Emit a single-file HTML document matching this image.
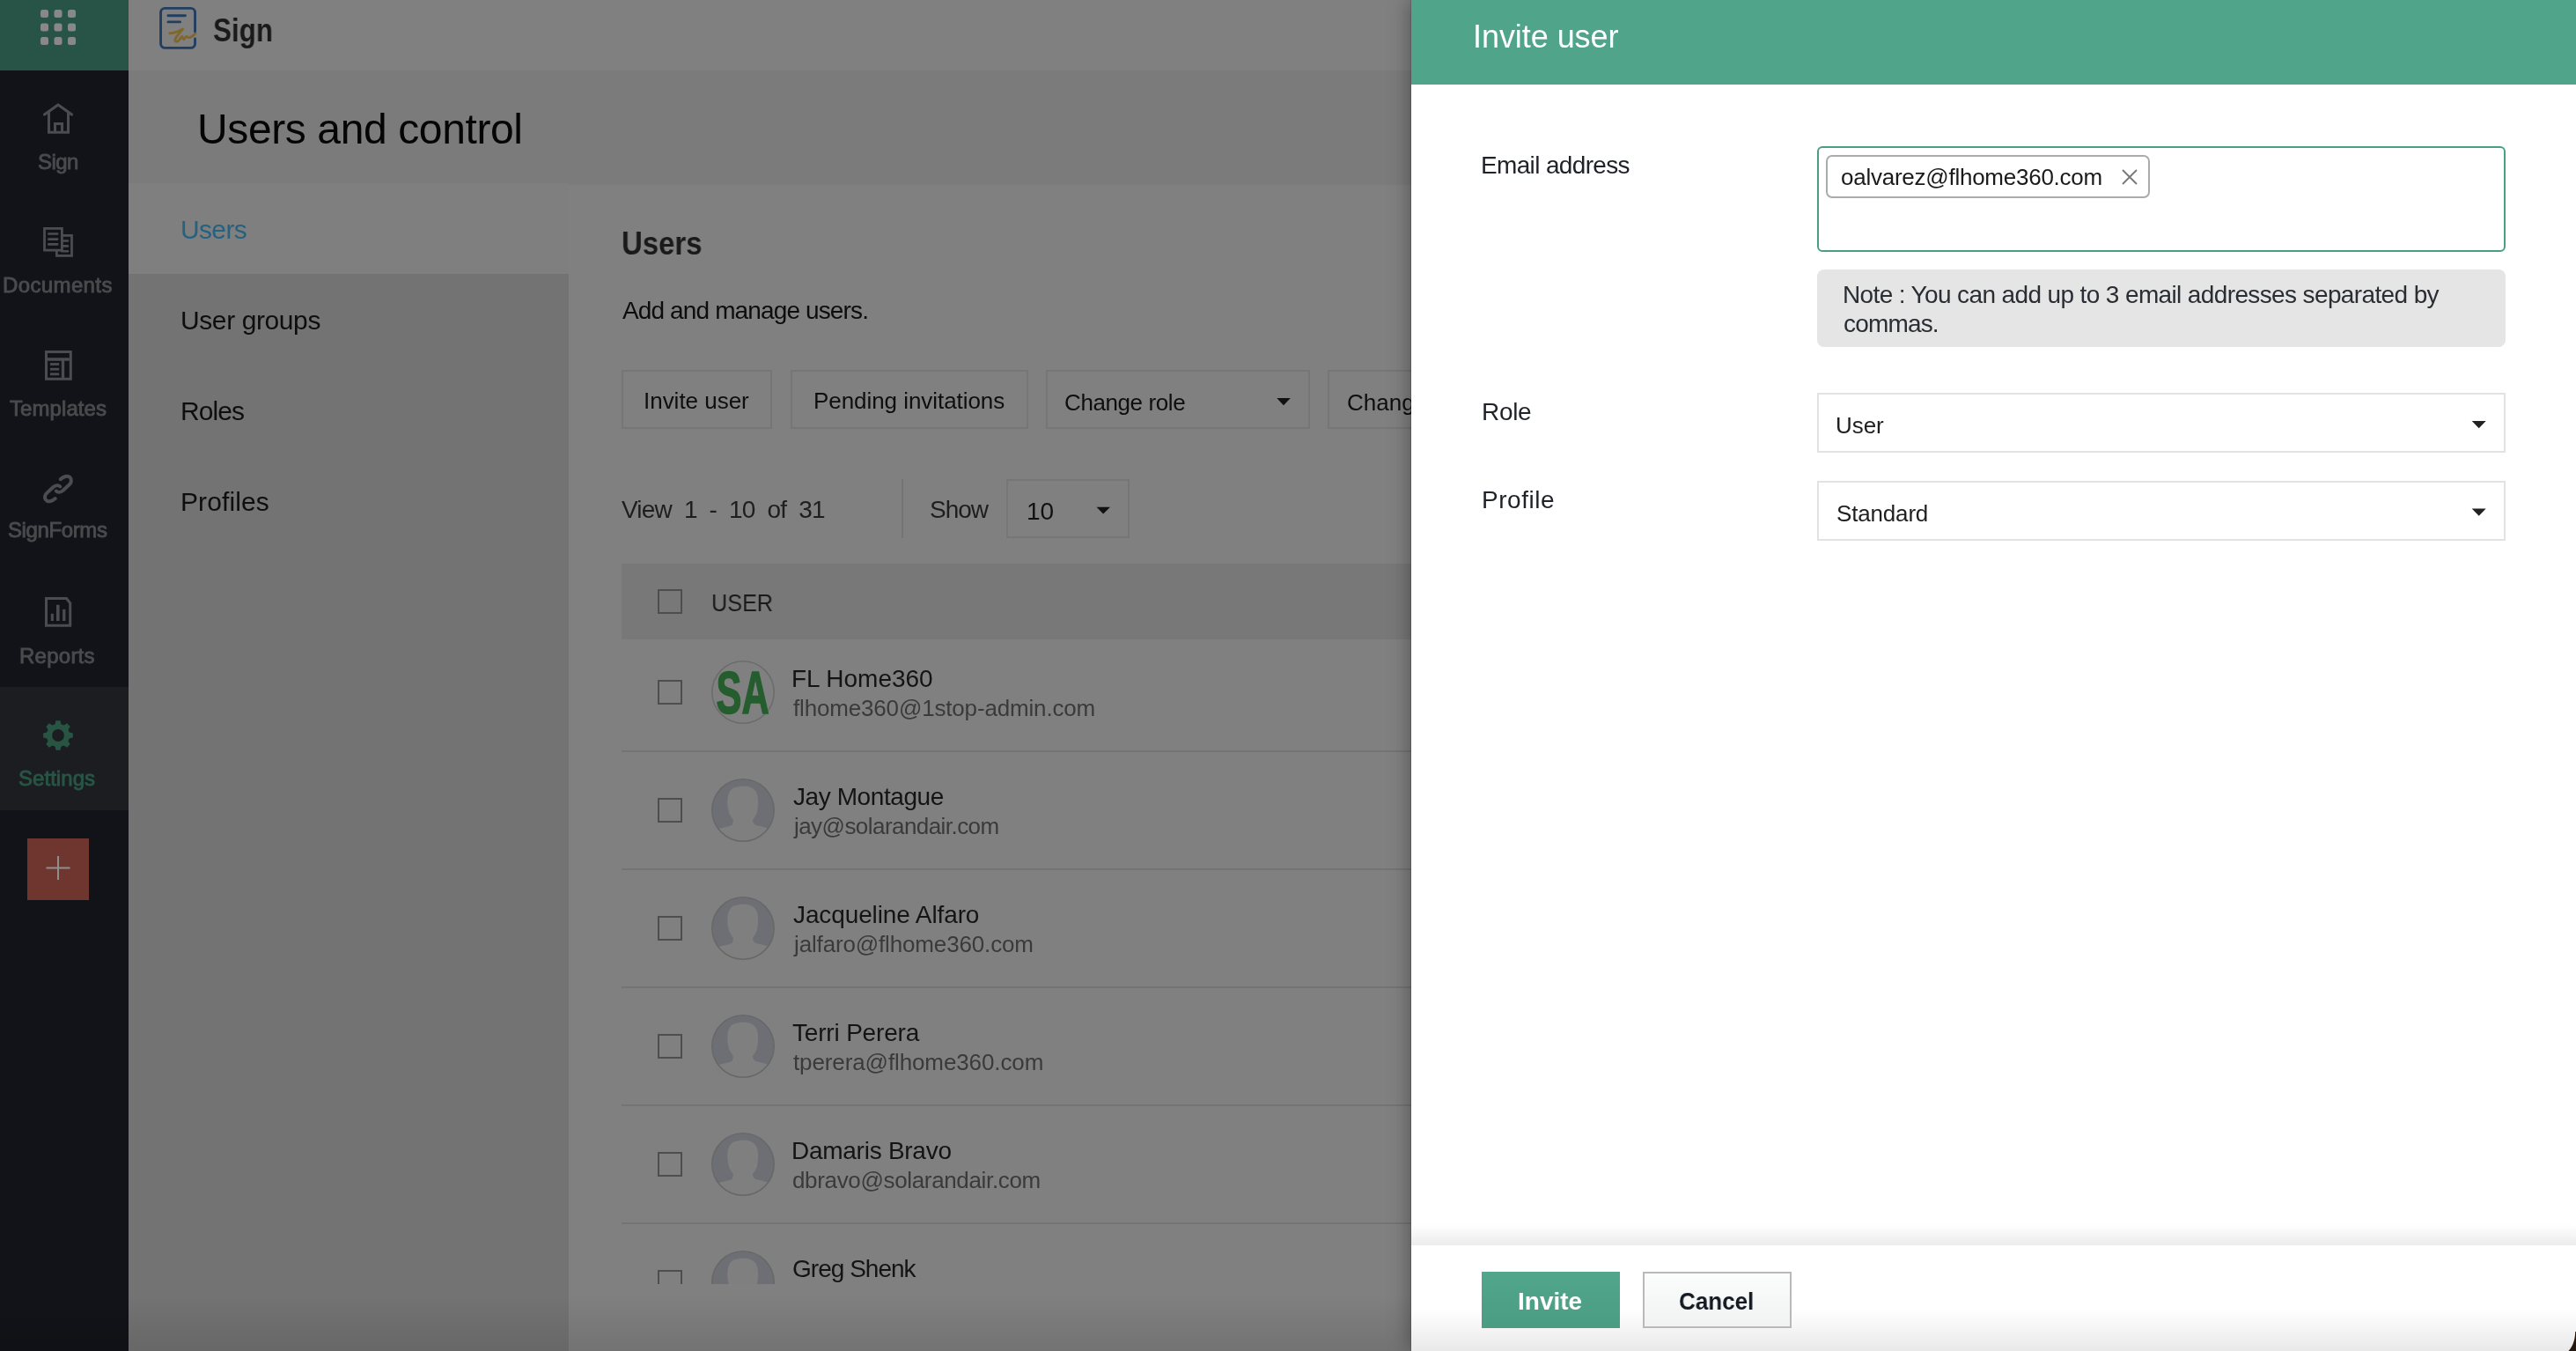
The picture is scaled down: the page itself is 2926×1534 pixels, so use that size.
<!DOCTYPE html>
<html><head><meta charset="utf-8"><title>Invite user</title>
<style>
html,body{margin:0;padding:0;width:2926px;height:1534px;overflow:hidden;background:#808080;}
body{position:relative;font-family:"Liberation Sans",sans-serif;-webkit-font-smoothing:antialiased;}
.b{position:absolute;}
.t{position:absolute;white-space:pre;will-change:transform;}
svg.b{overflow:visible;}
</style></head><body>
<div class="b" style="left:0px;top:0px;width:2926px;height:1534px;background:#808080;"></div>
<div class="b" style="left:146px;top:0px;width:1457px;height:80px;background:#808080;"></div>
<div class="b" style="left:146px;top:80px;width:1457px;height:130px;background:#7b7b7b;"></div>
<div class="b" style="left:146px;top:208px;width:500px;height:103px;background:#7f7f7f;"></div>
<div class="b" style="left:146px;top:311px;width:500px;height:1223px;background:#737373;"></div>
<div class="b" style="left:646px;top:210px;width:957px;height:1324px;background:#808080;"></div>
<div class="b" style="left:0px;top:0px;width:146px;height:1534px;background:#111318;"></div>
<div class="b" style="left:0px;top:0px;width:146px;height:80px;background:#275446;"></div>
<div class="b" style="left:0px;top:780px;width:146px;height:140px;background:#1b1d21;"></div>
<div class="b" style="left:31px;top:952px;width:70px;height:70px;background:#6f362f;"></div>
<svg class="b" style="left:0;top:0" width="146" height="1100"><rect x="46" y="11" width="9" height="9" rx="2.5" fill="#888"/><rect x="46" y="26.5" width="9" height="9" rx="2.5" fill="#888"/><rect x="46" y="42" width="9" height="9" rx="2.5" fill="#888"/><rect x="61.5" y="11" width="9" height="9" rx="2.5" fill="#888"/><rect x="61.5" y="26.5" width="9" height="9" rx="2.5" fill="#888"/><rect x="61.5" y="42" width="9" height="9" rx="2.5" fill="#888"/><rect x="77" y="11" width="9" height="9" rx="2.5" fill="#888"/><rect x="77" y="26.5" width="9" height="9" rx="2.5" fill="#888"/><rect x="77" y="42" width="9" height="9" rx="2.5" fill="#888"/><path d="M50.5 130 L66 119 L81.5 130" fill="none" stroke="#4b4c4f" stroke-width="3.2" stroke-linecap="round" stroke-linejoin="round"/><path d="M55.5 127 V150.3 H77.5 V127" fill="none" stroke="#4b4c4f" stroke-width="3"/><path d="M62.5 150 V140.5 H70.5 V150" fill="none" stroke="#4b4c4f" stroke-width="3"/><rect x="64.4" y="267.4" width="17.1" height="23" fill="none" stroke="#4b4c4f" stroke-width="2.8"/><path d="M70 273.5 H77" stroke="#4b4c4f" stroke-width="2.6" stroke-linecap="round"/><path d="M70 279.4 H77" stroke="#4b4c4f" stroke-width="2.6" stroke-linecap="round"/><path d="M70 285.2 H77" stroke="#4b4c4f" stroke-width="2.6" stroke-linecap="round"/><rect x="50.5" y="259.4" width="19.9" height="24.7" fill="#111318" stroke="#4b4c4f" stroke-width="2.8"/><path d="M55.3 265.5 H65.2" stroke="#4b4c4f" stroke-width="2.6" stroke-linecap="round"/><path d="M55.3 271.6 H65.2" stroke="#4b4c4f" stroke-width="2.6" stroke-linecap="round"/><path d="M55.3 277.4 H65.2" stroke="#4b4c4f" stroke-width="2.6" stroke-linecap="round"/><rect x="52.5" y="399.5" width="27.8" height="30.8" fill="none" stroke="#4b4c4f" stroke-width="3"/><path d="M55 408 H77.5" stroke="#4b4c4f" stroke-width="3.6" stroke-linecap="round"/><path d="M71.5 408 V429" stroke="#4b4c4f" stroke-width="3.3"/><path d="M57 413.5 H67.2" stroke="#4b4c4f" stroke-width="2.8"/><path d="M57 419.2 H67.2" stroke="#4b4c4f" stroke-width="2.8"/><path d="M57 424.8 H67.2" stroke="#4b4c4f" stroke-width="2.8"/><g fill="none" stroke="#4b4c4f" stroke-width="4" stroke-linecap="round" stroke-linejoin="round"><path d="M62.8 566.1 C59 569.5 54 570.5 52 567.5 C50 565 51 561.5 53.5 559.5 L60.5 553 C63 551 66.5 550.5 68.3 552.5"/><path d="M68.7 544.2 C72 541 77 539.5 79.5 542 C82 544.5 81 548.5 78.5 550.5 L71.5 557 C69 559 65.5 559.5 63.8 557.5"/></g><path d="M52.5 679.5 H75.5 L79.7 684.7 V710.3 H52.5 Z" fill="none" stroke="#4b4c4f" stroke-width="3" stroke-linejoin="miter"/><rect x="57.8" y="696.8" width="3.1" height="8.2" fill="#4b4c4f"/><rect x="64" y="686.8" width="3.6" height="18.2" fill="#4b4c4f"/><rect x="71.1" y="691.8" width="3.3" height="13.2" fill="#4b4c4f"/><path d="M62.61 822.24 L63.46 818.19 L68.54 818.19 L69.39 822.24 L72.62 823.58 L76.09 821.32 L79.68 824.91 L77.42 828.38 L78.76 831.61 L82.81 832.46 L82.81 837.54 L78.76 838.39 L77.42 841.62 L79.68 845.09 L76.09 848.68 L72.62 846.42 L69.39 847.76 L68.54 851.81 L63.46 851.81 L62.61 847.76 L59.38 846.42 L55.91 848.68 L52.32 845.09 L54.58 841.62 L53.24 838.39 L49.19 837.54 L49.19 832.46 L53.24 831.61 L54.58 828.38 L52.32 824.91 L55.91 821.32 L59.38 823.58 Z M72.9 835 A6.9 6.9 0 1 0 59.1 835 A6.9 6.9 0 1 0 72.9 835 Z" fill="#285443" fill-rule="evenodd"/><path d="M66 972 V999 M52.5 985.5 H79.5" stroke="#8f8f8f" stroke-width="2"/></svg>
<div class="t" style="left:43.10px;top:172px;font-size:24px;line-height:24px;color:#4b4b4e;letter-spacing:-0.567px;-webkit-text-stroke:0.86px #4b4b4e;">Sign</div>
<div class="t" style="left:3.00px;top:312.4px;font-size:24px;line-height:24px;color:#4b4b4e;letter-spacing:0.375px;-webkit-text-stroke:0.86px #4b4b4e;">Documents</div>
<div class="t" style="left:11.20px;top:452.4px;font-size:24px;line-height:24px;color:#4b4b4e;letter-spacing:0.075px;-webkit-text-stroke:0.86px #4b4b4e;">Templates</div>
<div class="t" style="left:9.00px;top:589.5px;font-size:24px;line-height:24px;color:#4b4b4e;letter-spacing:-0.388px;-webkit-text-stroke:0.86px #4b4b4e;">SignForms</div>
<div class="t" style="left:21.90px;top:732.6px;font-size:24px;line-height:24px;color:#4b4b4e;letter-spacing:0.250px;-webkit-text-stroke:0.86px #4b4b4e;">Reports</div>
<div class="t" style="left:21.40px;top:872px;font-size:24px;line-height:24px;color:#285645;letter-spacing:0.043px;-webkit-text-stroke:0.86px #285645;">Settings</div>
<svg class="b" style="left:170px;top:0" width="70" height="70" viewBox="170 0 70 70"><path d="M221.55 36.3 V14.2 a4.85 4.85 0 0 0 -4.85 -4.85 H187.4 a4.85 4.85 0 0 0 -4.85 4.85 V49.5 a4.85 4.85 0 0 0 4.85 4.85 H216.7 a4.85 4.85 0 0 0 4.85 -4.85 V44" fill="none" stroke="#223f62" stroke-width="2.9" stroke-linecap="round"/><path d="M190.9 17.7 H210.5 M191 24.9 H204.6" stroke="#223f62" stroke-width="2.9" stroke-linecap="round"/><path d="M192.7 37.8 C197 37.8 203 35.5 207.6 33 C205 36 200.5 41 199 44.5 C198 47.5 201 48 203 46 C205 44 206 41.5 206.8 41.5 C207.5 42 207.8 45 209 44.5 C210 44 211 41 212 41.5 C213.5 42.5 214.5 43.5 217 42 C219 41 220.5 39.5 222 38" fill="none" stroke="#80672e" stroke-width="2.9" stroke-linecap="round" stroke-linejoin="round"/></svg>
<div class="t" style="left:242.00px;top:16.6px;font-size:36px;line-height:36px;color:#1a1a1a;font-weight:bold;transform:scaleX(0.8720);transform-origin:0 0;">Sign</div>
<div class="t" style="left:224.20px;top:122.5px;font-size:48px;line-height:48px;color:#050505;letter-spacing:-0.387px;">Users and control</div>
<div class="t" style="left:205.20px;top:245.8px;font-size:30px;line-height:30px;color:#26627f;letter-spacing:-0.650px;">Users</div>
<div class="t" style="left:205.20px;top:349.2px;font-size:30px;line-height:30px;color:#0e0e0e;letter-spacing:-0.400px;">User groups</div>
<div class="t" style="left:205.00px;top:452.4px;font-size:30px;line-height:30px;color:#0e0e0e;letter-spacing:-0.900px;">Roles</div>
<div class="t" style="left:205.00px;top:555px;font-size:30px;line-height:30px;color:#0e0e0e;letter-spacing:0.114px;">Profiles</div>
<div class="t" style="left:706.00px;top:259.1px;font-size:36px;line-height:36px;color:#1a1a1a;font-weight:bold;transform:scaleX(0.9149);transform-origin:0 0;">Users</div>
<div class="t" style="left:706.80px;top:338.7px;font-size:28px;line-height:28px;color:#0d0d0d;letter-spacing:-0.870px;">Add and manage users.</div>
<div class="b" style="left:706px;top:420px;width:171px;height:67px;border:2px solid #767676;box-sizing:border-box;"></div>
<div class="b" style="left:898px;top:420px;width:270px;height:67px;border:2px solid #767676;box-sizing:border-box;"></div>
<div class="b" style="left:1188px;top:420px;width:300px;height:67px;border:2px solid #767676;box-sizing:border-box;"></div>
<div class="b" style="left:1508px;top:420px;width:200px;height:67px;border:2px solid #767676;box-sizing:border-box;"></div>
<div class="t" style="left:731.20px;top:441.7px;font-size:26px;line-height:26px;color:#0e0e0e;letter-spacing:-0.020px;">Invite user</div>
<div class="t" style="left:923.80px;top:441.7px;font-size:26px;line-height:26px;color:#0e0e0e;letter-spacing:-0.056px;">Pending invitations</div>
<div class="t" style="left:1209.00px;top:444px;font-size:26px;line-height:26px;color:#0e0e0e;letter-spacing:-0.400px;">Change role</div>
<div class="t" style="left:1529.80px;top:444px;font-size:26px;line-height:26px;color:#0e0e0e;">Change profile</div>
<svg class="b" style="left:1440px;top:440px" width="40" height="30"><path d="M10.3 12 H25.8 L18 20.2 Z" fill="#111"/></svg>
<div class="t" style="left:706.00px;top:565.3px;font-size:28px;line-height:28px;color:#1e1e1e;letter-spacing:-0.810px;">View  1  -  10  of  31</div>
<div class="b" style="left:1024px;top:544px;width:2px;height:67px;background:#747474;"></div>
<div class="t" style="left:1055.80px;top:565.3px;font-size:28px;line-height:28px;color:#1e1e1e;letter-spacing:-1.000px;">Show</div>
<div class="b" style="left:1143px;top:544px;width:140px;height:67px;border:2px solid #767676;box-sizing:border-box;"></div>
<div class="t" style="left:1165.80px;top:566.8px;font-size:28px;line-height:28px;color:#111;">10</div>
<svg class="b" style="left:1240px;top:570px" width="30" height="20"><path d="M5.5 5.7 H21 L13.2 13.4 Z" fill="#111"/></svg>
<div class="b" style="left:706px;top:640px;width:897px;height:86px;background:#787878;"></div>
<div class="b" style="left:747px;top:669px;width:28px;height:28px;border:2px solid #4e4e4e;box-sizing:border-box;"></div>
<div class="t" style="left:808.40px;top:671.3px;font-size:28px;line-height:28px;color:#1a1a1a;transform:scaleX(0.9001);transform-origin:0 0;">USER</div>
<div class="b" style="left:0;top:0;width:1603px;height:1458px;overflow:hidden">
<div class="b" style="left:747px;top:772px;width:28px;height:28px;border:2px solid #4e4e4e;box-sizing:border-box;"></div>
<div class="b" style="left:706px;top:852px;width:897px;height:2px;background:#747474;"></div>
<svg class="b" style="left:806px;top:748px" width="76" height="76" viewBox="-38 -38 76 76"><circle cx="0" cy="0" r="35.2" fill="none" stroke="#6c6c6c" stroke-width="1.6"/></svg>
<svg class="b" style="left:800px;top:746px" width="90" height="80" viewBox="0 0 90 80"><text x="13.6" y="64" font-family="Liberation Sans" font-weight="bold" font-size="68" fill="#265d2f" stroke="#265d2f" stroke-width="1.6" textLength="60" lengthAdjust="spacingAndGlyphs">SA</text></svg>
<div class="t" style="left:899.40px;top:757.3px;font-size:28px;line-height:28px;color:#141414;letter-spacing:-0.022px;">FL Home360</div>
<div class="t" style="left:901.00px;top:790.5px;font-size:26px;line-height:26px;color:#3a3a3a;letter-spacing:-0.167px;">flhome360@1stop-admin.com</div>
<div class="b" style="left:747px;top:906px;width:28px;height:28px;border:2px solid #4e4e4e;box-sizing:border-box;"></div>
<div class="b" style="left:706px;top:986px;width:897px;height:2px;background:#747474;"></div>
<svg class="b" style="left:806px;top:882px" width="76" height="76" viewBox="-38 -38 76 76"><defs><clipPath id="c1"><circle cx="0" cy="0" r="35"/></clipPath></defs><circle cx="0" cy="0" r="35" fill="#6e6f75"/><g clip-path="url(#c1)"><path d="M-11.3 10.7 C-13 8 -15.5 5 -16 2.7 C-17 -2 -18 -6 -17.7 -10.7 C-17.5 -18 -15 -24 -9.5 -25.7 C-6 -27 -2 -27.5 3 -27.2 C9 -27 14 -24 16 -18 C17.5 -13 17.2 -7 16.8 -4 C16.3 1 15.5 4 14.7 5.3 C13.5 8 11.5 10 10.7 11.3 C11.5 14 12.5 16 14 16.7 C19 18 24 19 28 20.5 L40 22 L40 40 L-40 40 L-40 22 L-28 21 C-22 19.5 -17 18.5 -13 17.3 C-11.5 15.5 -11 13 -11.3 10.7 Z" fill="#7f7f7f"/></g><circle cx="0" cy="0" r="35.2" fill="none" stroke="#686868" stroke-width="1.6"/></svg>
<div class="t" style="left:901.40px;top:891.3px;font-size:28px;line-height:28px;color:#141414;letter-spacing:-0.418px;">Jay Montague</div>
<div class="t" style="left:902.00px;top:924.5px;font-size:26px;line-height:26px;color:#3a3a3a;letter-spacing:-0.556px;">jay@solarandair.com</div>
<div class="b" style="left:747px;top:1040px;width:28px;height:28px;border:2px solid #4e4e4e;box-sizing:border-box;"></div>
<div class="b" style="left:706px;top:1120px;width:897px;height:2px;background:#747474;"></div>
<svg class="b" style="left:806px;top:1016px" width="76" height="76" viewBox="-38 -38 76 76"><defs><clipPath id="c2"><circle cx="0" cy="0" r="35"/></clipPath></defs><circle cx="0" cy="0" r="35" fill="#6e6f75"/><g clip-path="url(#c2)"><path d="M-11.3 10.7 C-13 8 -15.5 5 -16 2.7 C-17 -2 -18 -6 -17.7 -10.7 C-17.5 -18 -15 -24 -9.5 -25.7 C-6 -27 -2 -27.5 3 -27.2 C9 -27 14 -24 16 -18 C17.5 -13 17.2 -7 16.8 -4 C16.3 1 15.5 4 14.7 5.3 C13.5 8 11.5 10 10.7 11.3 C11.5 14 12.5 16 14 16.7 C19 18 24 19 28 20.5 L40 22 L40 40 L-40 40 L-40 22 L-28 21 C-22 19.5 -17 18.5 -13 17.3 C-11.5 15.5 -11 13 -11.3 10.7 Z" fill="#7f7f7f"/></g><circle cx="0" cy="0" r="35.2" fill="none" stroke="#686868" stroke-width="1.6"/></svg>
<div class="t" style="left:901.40px;top:1025.3px;font-size:28px;line-height:28px;color:#141414;letter-spacing:-0.113px;">Jacqueline Alfaro</div>
<div class="t" style="left:902.00px;top:1058.5px;font-size:26px;line-height:26px;color:#3a3a3a;letter-spacing:-0.150px;">jalfaro@flhome360.com</div>
<div class="b" style="left:747px;top:1174px;width:28px;height:28px;border:2px solid #4e4e4e;box-sizing:border-box;"></div>
<div class="b" style="left:706px;top:1254px;width:897px;height:2px;background:#747474;"></div>
<svg class="b" style="left:806px;top:1150px" width="76" height="76" viewBox="-38 -38 76 76"><defs><clipPath id="c3"><circle cx="0" cy="0" r="35"/></clipPath></defs><circle cx="0" cy="0" r="35" fill="#6e6f75"/><g clip-path="url(#c3)"><path d="M-11.3 10.7 C-13 8 -15.5 5 -16 2.7 C-17 -2 -18 -6 -17.7 -10.7 C-17.5 -18 -15 -24 -9.5 -25.7 C-6 -27 -2 -27.5 3 -27.2 C9 -27 14 -24 16 -18 C17.5 -13 17.2 -7 16.8 -4 C16.3 1 15.5 4 14.7 5.3 C13.5 8 11.5 10 10.7 11.3 C11.5 14 12.5 16 14 16.7 C19 18 24 19 28 20.5 L40 22 L40 40 L-40 40 L-40 22 L-28 21 C-22 19.5 -17 18.5 -13 17.3 C-11.5 15.5 -11 13 -11.3 10.7 Z" fill="#7f7f7f"/></g><circle cx="0" cy="0" r="35.2" fill="none" stroke="#686868" stroke-width="1.6"/></svg>
<div class="t" style="left:900.40px;top:1159.3px;font-size:28px;line-height:28px;color:#141414;letter-spacing:-0.182px;">Terri Perera</div>
<div class="t" style="left:901.00px;top:1192.5px;font-size:26px;line-height:26px;color:#3a3a3a;letter-spacing:-0.110px;">tperera@flhome360.com</div>
<div class="b" style="left:747px;top:1308px;width:28px;height:28px;border:2px solid #4e4e4e;box-sizing:border-box;"></div>
<div class="b" style="left:706px;top:1388px;width:897px;height:2px;background:#747474;"></div>
<svg class="b" style="left:806px;top:1284px" width="76" height="76" viewBox="-38 -38 76 76"><defs><clipPath id="c4"><circle cx="0" cy="0" r="35"/></clipPath></defs><circle cx="0" cy="0" r="35" fill="#6e6f75"/><g clip-path="url(#c4)"><path d="M-11.3 10.7 C-13 8 -15.5 5 -16 2.7 C-17 -2 -18 -6 -17.7 -10.7 C-17.5 -18 -15 -24 -9.5 -25.7 C-6 -27 -2 -27.5 3 -27.2 C9 -27 14 -24 16 -18 C17.5 -13 17.2 -7 16.8 -4 C16.3 1 15.5 4 14.7 5.3 C13.5 8 11.5 10 10.7 11.3 C11.5 14 12.5 16 14 16.7 C19 18 24 19 28 20.5 L40 22 L40 40 L-40 40 L-40 22 L-28 21 C-22 19.5 -17 18.5 -13 17.3 C-11.5 15.5 -11 13 -11.3 10.7 Z" fill="#7f7f7f"/></g><circle cx="0" cy="0" r="35.2" fill="none" stroke="#686868" stroke-width="1.6"/></svg>
<div class="t" style="left:899.40px;top:1293.3px;font-size:28px;line-height:28px;color:#141414;letter-spacing:-0.267px;">Damaris Bravo</div>
<div class="t" style="left:900.00px;top:1326.5px;font-size:26px;line-height:26px;color:#3a3a3a;letter-spacing:-0.343px;">dbravo@solarandair.com</div>
<div class="b" style="left:747px;top:1442px;width:28px;height:28px;border:2px solid #4e4e4e;box-sizing:border-box;"></div>
<svg class="b" style="left:806px;top:1418px" width="76" height="76" viewBox="-38 -38 76 76"><defs><clipPath id="c5"><circle cx="0" cy="0" r="35"/></clipPath></defs><circle cx="0" cy="0" r="35" fill="#6e6f75"/><g clip-path="url(#c5)"><path d="M-11.3 10.7 C-13 8 -15.5 5 -16 2.7 C-17 -2 -18 -6 -17.7 -10.7 C-17.5 -18 -15 -24 -9.5 -25.7 C-6 -27 -2 -27.5 3 -27.2 C9 -27 14 -24 16 -18 C17.5 -13 17.2 -7 16.8 -4 C16.3 1 15.5 4 14.7 5.3 C13.5 8 11.5 10 10.7 11.3 C11.5 14 12.5 16 14 16.7 C19 18 24 19 28 20.5 L40 22 L40 40 L-40 40 L-40 22 L-28 21 C-22 19.5 -17 18.5 -13 17.3 C-11.5 15.5 -11 13 -11.3 10.7 Z" fill="#7f7f7f"/></g><circle cx="0" cy="0" r="35.2" fill="none" stroke="#686868" stroke-width="1.6"/></svg>
<div class="t" style="left:900.40px;top:1427.3px;font-size:28px;line-height:28px;color:#141414;letter-spacing:-0.978px;">Greg Shenk</div>
<div class="t" style="left:900.00px;top:1460.5px;font-size:26px;line-height:26px;color:#3a3a3a;">gshenk@solarandair.com</div>
</div>
<div class="b" style="left:0px;top:1470px;width:1603px;height:64px;background:linear-gradient(rgba(0,0,0,0),rgba(0,0,0,0.1));"></div>
<div class="b" style="left:1603px;top:0;width:1323px;height:1534px;background:#fff;box-shadow:-2px 0 22px rgba(0,0,0,0.35), -1px 0 0 rgba(0,0,0,0.12);"></div>
<div class="b" style="left:1603px;top:0px;width:1323px;height:96px;background:#4fa48a;"></div>
<div class="t" style="left:1673.00px;top:24.299999999999997px;font-size:36px;line-height:36px;color:#ffffff;letter-spacing:-0.060px;">Invite user</div>
<div class="t" style="left:1682.00px;top:174.3px;font-size:28px;line-height:28px;color:#1f2329;letter-spacing:-0.650px;">Email address</div>
<div class="b" style="left:2064px;top:166px;width:782px;height:120px;border:2px solid #4a9e82;border-radius:6px;box-sizing:border-box;"></div>
<div class="b" style="left:2074px;top:176px;width:368px;height:49px;border:2px solid #ababab;border-radius:7px;box-sizing:border-box;"></div>
<div class="t" style="left:2091.20px;top:188px;font-size:26px;line-height:26px;color:#1a1a1a;letter-spacing:-0.248px;">oalvarez@flhome360.com</div>
<svg class="b" style="left:2405px;top:187px" width="28" height="28"><path d="M6 6 L22 22 M22 6 L6 22" stroke="#777" stroke-width="1.8"/></svg>
<div class="b" style="left:2064px;top:306px;width:782px;height:88px;background:#e5e5e5;border-radius:8px;"></div>
<div class="t" style="left:2093.00px;top:321.3px;font-size:28px;line-height:28px;color:#2a2e33;letter-spacing:-0.626px;">Note : You can add up to 3 email addresses separated by</div>
<div class="t" style="left:2094.00px;top:354.2px;font-size:28px;line-height:28px;color:#2a2e33;letter-spacing:-0.833px;">commas.</div>
<div class="t" style="left:1682.60px;top:454.3px;font-size:28px;line-height:28px;color:#1f2329;letter-spacing:-0.333px;">Role</div>
<div class="t" style="left:1682.60px;top:553.8px;font-size:28px;line-height:28px;color:#1f2329;letter-spacing:0.533px;">Profile</div>
<div class="b" style="left:2064px;top:446px;width:782px;height:68px;border:2px solid #e2e2e2;box-sizing:border-box;"></div>
<div class="b" style="left:2064px;top:546px;width:782px;height:68px;border:2px solid #e2e2e2;box-sizing:border-box;"></div>
<div class="t" style="left:2084.80px;top:470.2px;font-size:26px;line-height:26px;color:#1f1f1f;letter-spacing:-0.067px;">User</div>
<div class="t" style="left:2085.80px;top:569.9px;font-size:26px;line-height:26px;color:#1f1f1f;letter-spacing:-0.171px;">Standard</div>
<svg class="b" style="left:2800px;top:470px" width="30" height="150"><path d="M7.7 8 H23.7 L15.7 16.3 Z M7.7 107.5 H23.7 L15.7 115.8 Z" fill="#222"/></svg>
<div class="b" style="left:1603px;top:1390px;width:1323px;height:24px;background:linear-gradient(#ffffff,#ececec);"></div>
<div class="b" style="left:1603px;top:1414px;width:1323px;height:120px;background:linear-gradient(#ffffff 60%,#e9e9e9);"></div>
<div class="b" style="left:1683px;top:1444px;width:157px;height:64px;background:linear-gradient(#51a68b,#4b9c82);"></div>
<div class="t" style="left:1724.40px;top:1463.8px;font-size:28px;line-height:28px;color:#ffffff;font-weight:bold;transform:scaleX(0.9976);transform-origin:0 0;">Invite</div>
<div class="b" style="left:1866px;top:1444px;width:169px;height:64px;border:2px solid #b9b9b9;box-sizing:border-box;background:linear-gradient(#fbfcfc,#f1f3f3);"></div>
<div class="t" style="left:1906.90px;top:1463.8px;font-size:28px;line-height:28px;color:#141a22;font-weight:bold;transform:scaleX(0.9283);transform-origin:0 0;">Cancel</div>
<svg class="b" style="left:2906px;top:1504px" width="20" height="30"><path d="M19.2 8 C19 16 17 24 11.5 30 H20 V8 Z" fill="#26180e"/></svg>
</body></html>
